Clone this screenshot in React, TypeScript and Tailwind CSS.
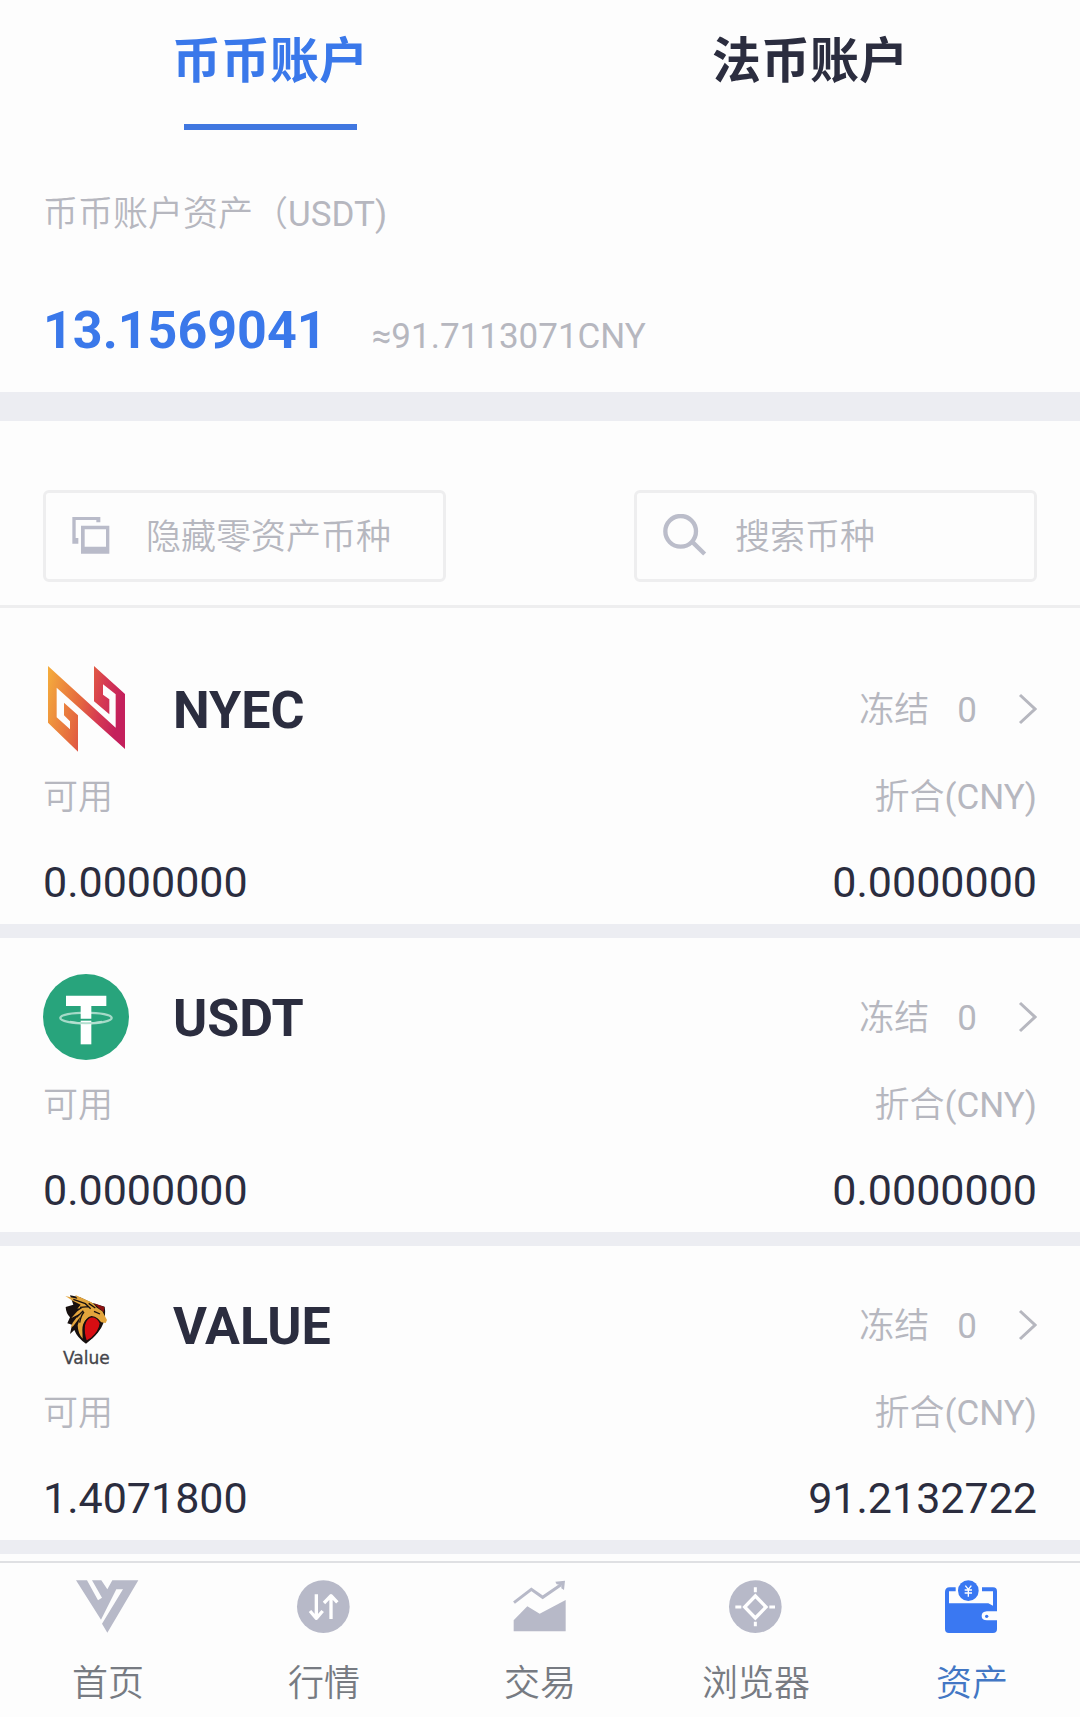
import { useState } from "react";
import type { ReactNode } from "react";

const NyecLogo = () => (
  <svg className="size-[86px]" viewBox="0 12 258 258" aria-hidden="true">
    <defs>
      <linearGradient id="nyec" x1="0" y1="0" x2="1" y2="0.25">
        <stop offset="0" stopColor="#f5ae3c" />
        <stop offset="0.5" stopColor="#e4663f" />
        <stop offset="0.75" stopColor="#d63a52" />
        <stop offset="1" stopColor="#c4205c" />
      </linearGradient>
    </defs>
    <path
      fill="url(#nyec)"
      d="M15 12 218 197V97L180 67V98L199 112V157L153 118V12L246 96V261L41 77V166L81 202V178L63 160V122L105 160V269L15 182Z"
    />
  </svg>
);

const UsdtLogo = () => (
  <svg className="size-[86px]" viewBox="69 72 258 258" aria-hidden="true">
    <circle cx="198" cy="201" r="129" fill="#28a47c" />
    <ellipse cx="198" cy="204" rx="77" ry="16" fill="none" stroke="#a5dac8" strokeWidth="7" />
    <path fill="#fff" d="M138 137H259V168H214V206H182V168H138Z" />
    <path fill="#fff" d="M182 212H214V283H182Z" />
    <path d="M150 215Q198 225 246 215" fill="none" stroke="#b4e0d0" strokeWidth="6" />
  </svg>
);

const ValueLogo = () => (
  <svg className="size-[86px]" viewBox="69 36 258 258" role="img" aria-label="Value">
    <path fill="#17100f" d="M137 111 160 104 150 76 180 82 215 98 254 110Q258 132 250 160Q240 190 198 221Q172 204 163 180L150 192 156 164 142 160 150 142Q138 130 137 111Z" />
    <path fill="#8e1111" d="M222 100 253 111 251 126 236 114Z" />
    <path fill="#e3a53c" d="M136 78 172 86 166 75 204 92Q222 98 229 112L247 124 261 150 257 159 244 157 232 147Q214 140 201 146Q187 158 187 180L188 206Q174 192 173 166L181 140 160 168 152 174 158 158 178 132 154 144 172 124 190 112 172 116 182 104 158 92Z" />
    <path fill="none" stroke="#17100f" strokeWidth="4" d="M160 88 196 101 212 116M180 112 206 110M192 126Q182 138 179 158M170 142 190 122M222 124 240 132M206 100 226 114" />
    <path fill="#d80d12" stroke="#17100f" strokeWidth="4" d="M193 166Q198 144 215 140 234 142 241 160 238 184 215 204L199 214Q190 190 193 166Z" />
    <text x="199" y="283" textAnchor="middle" fontSize="51" fill="#45454b" stroke="#45454b" strokeWidth="1" fontFamily="DejaVu Sans, sans-serif">
      Value
    </text>
  </svg>
);

const NavIcon = ({ viewBox, children }: { viewBox: string; children: ReactNode }) => (
  <svg className="h-[54px] w-16" viewBox={viewBox} fill="currentColor" aria-hidden="true">
    {children}
  </svg>
);

const coins = [
  { name: "NYEC", logo: <NyecLogo />, available: "0.0000000", cny: "0.0000000", frozen: "0" },
  { name: "USDT", logo: <UsdtLogo />, available: "0.0000000", cny: "0.0000000", frozen: "0" },
  { name: "VALUE", logo: <ValueLogo />, available: "1.4071800", cny: "91.2132722", frozen: "0" },
];

const navItems = [
  {
    label: "首页",
    icon: (
      <NavIcon viewBox="108 116 192 162">
        <path d="M108 120H141L174 180 186 172 156 120H184L202 147 217 120H295L202 277 186 250 249 147H229L183 238Z" />
      </NavIcon>
    ),
  },
  {
    label: "行情",
    icon: (
      <NavIcon viewBox="756 116 192 162">
        <circle cx="850" cy="199" r="79" />
        <path
          d="M829 162V232M810 212 829 234 848 212M873 236V168M852 188 873 166 892 186"
          fill="none"
          stroke="#fff"
          strokeWidth="10"
          strokeLinejoin="round"
        />
      </NavIcon>
    ),
  },
  {
    label: "交易",
    icon: (
      <NavIcon viewBox="144 116 192 162">
        <path d="M161 240 202 198 239 220 317 179V273H161Z" />
        <path d="M162 187 214 147 248 171 303 133" fill="none" stroke="currentColor" strokeWidth="9" />
        <path d="M286 124 315 121 312 149 304 144 304 134 290 132Z" />
      </NavIcon>
    ),
  },
  {
    label: "浏览器",
    icon: (
      <NavIcon viewBox="793 116 192 162">
        <circle cx="887" cy="199" r="79" />
        <path d="M887 167 919 200 887 233 855 200Z" fill="none" stroke="#fff" strokeWidth="10" />
        <path d="M887 141V156M887 244V258M827 200H845M929 200H946" stroke="#fff" strokeWidth="9" />
      </NavIcon>
    ),
  },
  {
    label: "资产",
    active: true,
    icon: (
      <NavIcon viewBox="241 236 192 162">
        <path
          fillRule="evenodd"
          d="M270 261H288V273H268V309H386L400 316V273H367V261H400Q412 261 412 273V333H382Q366 334 366 347T382 360H412V386Q412 398 400 398H268Q256 398 256 386V275Q256 261 270 261Z"
        />
        <circle cx="326" cy="271" r="31" />
        <path d="M317 256 326 267 335 256M326 267V289M315 269H337M315 278H337" fill="none" stroke="#fff" strokeWidth="4" />
        <circle cx="381" cy="348" r="5" />
      </NavIcon>
    ),
  },
];

const tabs = ["币币账户", "法币账户"];

export default function App() {
  const [tab, setTab] = useState(0);
  const [hideZero, setHideZero] = useState(false);

  return (
    <div className="flex min-h-screen flex-col bg-[#fdfdfd] font-[Roboto,'Noto_Sans_CJK_SC',sans-serif] text-[#2b2d3f]">
      {/* Account tabs */}
      <div className="grid grid-cols-2">
        {tabs.map((label, i) => (
          <button
            key={label}
            type="button"
            onClick={() => setTab(i)}
            className={`flex flex-col items-center pt-[26px] text-[49px] leading-[72px] font-bold ${tab === i ? "text-[#3a78ea]" : ""}`}
          >
            {label}
            <span className={`mt-[26px] h-1.5 w-[173px] ${tab === i ? "bg-[#4077e0]" : ""}`} />
          </button>
        ))}
      </div>

      {/* Balance */}
      <section className="border-b-[29px] border-[#ecedf2] px-[43px] pt-[58px] pb-7">
        <p className="text-[35px] leading-[54px] font-[350] text-[#b6b7bf]">
          币币账户资产（<span className="font-normal">USDT)</span>
        </p>
        <div className="mt-[57px] flex items-baseline gap-[45px]">
          <strong className="text-[52px] leading-[64px] font-bold text-[#3a78ea]">13.1569041</strong>
          <span className="text-[35px] text-[#b6b7bf]">≈91.7113071CNY</span>
        </div>
      </section>

      {/* Filters */}
      <div className="grid grid-cols-2 gap-[188px] border-b-[3px] border-[#eeeeef] px-[43px] pt-[69px] pb-[23px]">
        <button
          type="button"
          aria-pressed={hideZero}
          onClick={() => setHideZero(!hideZero)}
          className="flex h-[92px] items-center gap-9 rounded-md border-[3px] border-[#eeeeef] pl-[26px] text-[35px] font-[350] whitespace-nowrap text-[#b6b7bf]"
        >
          <svg className="size-[38px] shrink-0" viewBox="155 142 114 114" fill="#b9bbc9" aria-hidden="true">
            <path d="M156 141H240V158H228V151H166V205H174V222H156Z" />
            <path fillRule="evenodd" d="M182 168H267V252H182ZM193 179V231H257V179Z" />
          </svg>
          <span className="pt-1.5">隐藏零资产币种</span>
        </button>
        <label className="flex h-[92px] items-center gap-7 rounded-md border-[3px] border-[#eeeeef] pl-[26px]">
          <svg className="size-[44px] shrink-0" viewBox="188 135 132 132" fill="none" stroke="#bbbdca" strokeWidth="13" aria-hidden="true">
            <circle cx="241" cy="187" r="46" />
            <path d="M275 218 313 255" />
          </svg>
          <input
            type="text"
            aria-label="搜索币种"
            placeholder="搜索币种"
            className="w-full min-w-0 bg-transparent pt-1.5 text-[35px] font-[350] outline-none placeholder:text-[#b6b7bf]"
          />
        </label>
      </div>

      {/* Coins */}
      <main className="pt-[22px]">
        {coins.map((coin) => (
          <article key={coin.name} className="border-b-[14px] border-[#ecedf2] px-[43px] pt-9 pb-3">
            <div className="flex h-[86px] items-center">
              {coin.logo}
              <h2 className="ml-[44px] pt-1 text-[52px] leading-[64px] font-bold">{coin.name}</h2>
              <a href={`#${coin.name}`} className="ml-auto flex items-center text-[35px] font-[350] text-[#b6b7bf]">
                <span className="pt-1.5">冻结</span>
                <span className="ml-7 pt-1.5 font-normal">{coin.frozen}</span>
                <svg className="ml-10 h-8 w-5" viewBox="0 0 20 32" fill="none" stroke="currentColor" strokeWidth="3" aria-hidden="true">
                  <path d="M3 2 18 16 3 30" />
                </svg>
              </a>
            </div>
            <div className="mt-[19px] flex justify-between text-[35px] leading-[54px] font-[350] text-[#b6b7bf]">
              <span>可用</span>
              <span>
                折合<span className="font-normal">(CNY)</span>
              </span>
            </div>
            <div className="mt-[27px] flex justify-between text-[43px] leading-[60px]">
              <span>{coin.available}</span>
              <span>{coin.cny}</span>
            </div>
          </article>
        ))}
      </main>

      {/* Bottom navigation */}
      <nav className="mt-auto grid grid-cols-5 border-t-2 border-[#dfe0e3] pt-4 pb-1.5">
        {navItems.map((item) => (
          <a
            key={item.label}
            href={`#${item.label}`}
            className={`flex flex-col items-center ${item.active ? "text-[#3a78f2]" : "text-[#b7b9c8]"}`}
          >
            {item.icon}
            <span className={`mt-6 text-[36px] leading-[54px] font-[350] ${item.active ? "text-[#4377c4]" : "text-[#777b82]"}`}>
              {item.label}
            </span>
          </a>
        ))}
      </nav>
    </div>
  );
}
